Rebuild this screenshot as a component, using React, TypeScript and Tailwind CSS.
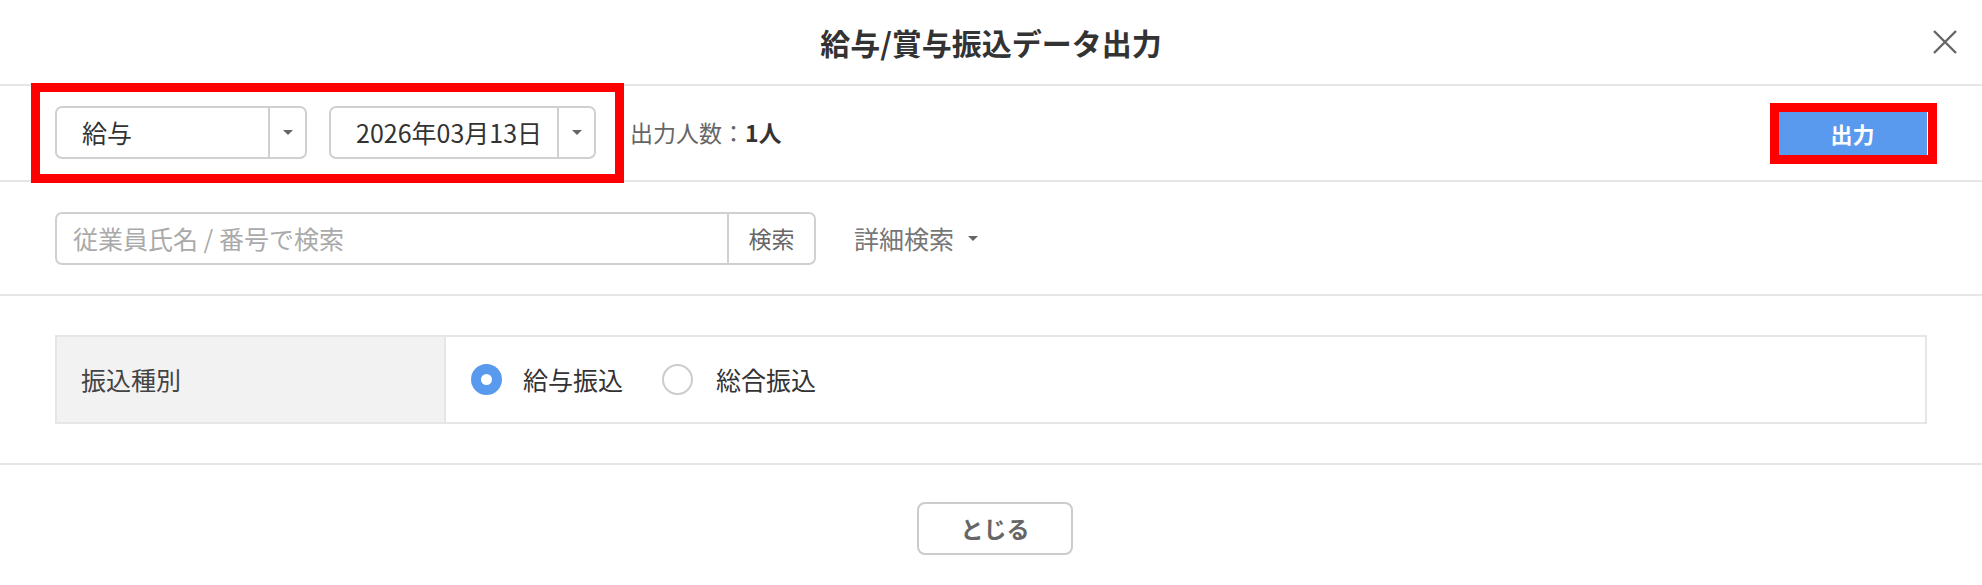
import React from 'react';

function Caret() {
  return <span className="inline-block h-0 w-0 border-x-[5px] border-t-[5px] border-x-transparent border-t-[#666666]" />;
}

function SelectBox({ value, width }: { value: string; width: string }) {
  return (
    <div className={`flex h-[53px] ${width} items-stretch rounded-[7px] border-2 border-[#d0d0d0] bg-white`}>
      <div className="flex flex-1 items-center pl-[25px] text-[25px] text-[#333333]">{value}</div>
      <div className="flex w-[37px] items-center justify-center border-l-2 border-[#d0d0d0]">
        <Caret />
      </div>
    </div>
  );
}

function Radio({ checked, label }: { checked: boolean; label: string }) {
  return (
    <label className="flex items-center">
      {checked ? (
        <span className="flex h-[31px] w-[31px] items-center justify-center rounded-full bg-[#5a9aee]">
          <span className="h-[11px] w-[11px] rounded-full bg-white" />
        </span>
      ) : (
        <span className="h-[31px] w-[31px] rounded-full border-2 border-[#cccccc] bg-white" />
      )}
      <span className={`${checked ? 'ml-[21px]' : 'ml-[23px]'} text-[25px] text-[#333333]`}>{label}</span>
    </label>
  );
}

export default function App() {
  return (
    <div
      className="h-[585px] w-[1982px] overflow-hidden bg-white leading-none"
      style={{ fontFamily: '"Noto Sans CJK JP", "Noto Sans", sans-serif' }}
    >
      {/* Header */}
      <div className="grid h-[86px] grid-cols-[1fr_auto_1fr] items-center border-b-2 border-[#e6e6e6]">
        <div />
        <h2 className="text-[30px] font-bold text-[#333333]">給与/賞与振込データ出力</h2>
        <div className="flex justify-end pr-[25px]">
          <svg width="24" height="24" viewBox="0 0 24 24" className="text-[#666666]">
            <path d="M1 1 L23 23 M23 1 L1 23" stroke="currentColor" strokeWidth="2.4" fill="none" />
          </svg>
        </div>
      </div>

      {/* Output row */}
      <div className="relative flex h-[96px] items-center border-b-2 border-[#e6e6e6] px-[55px] pb-[1px]">
        <div className="flex gap-[22px]">
          <SelectBox value="給与" width="w-[252px]" />
          <SelectBox value="2026年03月13日" width="w-[267px]" />
        </div>
        <div className="ml-[34px] text-[23px] text-[#666666]">
          出力人数：<span className="font-bold text-[#333333]">1人</span>
        </div>
        <button className="ml-auto h-[44px] w-[149px] bg-[#5a9aee] text-[22px] font-bold text-white">出力</button>

        {/* annotation boxes */}
        <div className="pointer-events-none absolute left-[31px] top-[-3px] h-[100px] w-[593px] border-[9px] border-[#ff0000]" />
        <div className="pointer-events-none absolute left-[1770px] top-[17px] h-[61px] w-[167px] border-[9px] border-[#ff0000]" />
      </div>

      {/* Search row */}
      <div className="flex h-[114px] items-center border-b-2 border-[#e6e6e6] px-[55px]">
        <div className="flex h-[53px] w-[761px] items-stretch rounded-[7px] border-2 border-[#d0d0d0]">
          <div className="flex flex-1 items-center pl-[16px] text-[25px] text-[#aaaaaa]">従業員氏名 / 番号で検索</div>
          <div className="flex w-[87px] items-center justify-center border-l-2 border-[#d0d0d0] text-[23px] text-[#666666]">
            検索
          </div>
        </div>
        <div className="ml-[38px] flex items-center text-[25px] text-[#777777]">
          詳細検索
          <span className="ml-[14px] flex items-center">
            <Caret />
          </span>
        </div>
      </div>

      {/* Transfer type */}
      <div className="flex h-[169px] items-center border-b-2 border-[#e6e6e6] px-[55px]">
        <div className="flex h-[89px] w-full border-2 border-[#e6e6e6]">
          <div className="flex w-[389px] items-center border-r-2 border-[#e6e6e6] bg-[#f2f2f2] pl-[24px] text-[25px] text-[#444444]">
            振込種別
          </div>
          <div className="flex items-center gap-[39px] pl-[25px]">
            <Radio checked label="給与振込" />
            <Radio checked={false} label="総合振込" />
          </div>
        </div>
      </div>

      {/* Footer */}
      <div className="flex justify-center pl-[8px] pt-[37px]">
        <button className="h-[53px] w-[156px] rounded-[8px] border-2 border-[#cccccc] bg-white text-[23px] font-bold text-[#666666]">
          とじる
        </button>
      </div>
    </div>
  );
}
